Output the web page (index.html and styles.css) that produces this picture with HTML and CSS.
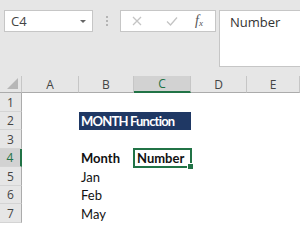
FILE: index.html
```html
<!DOCTYPE html>
<html>
<head>
<meta charset="utf-8">
<link rel="stylesheet" href="styles.css">
</head>
<body>
<div class="app">
  <div class="topbar">
    <div class="namebox">
      <span class="nb-text">C4</span>
      <span class="nb-arrow"></span>
    </div>
    <div class="sep"><i></i><i></i><i></i></div>
    <div class="fbtns">
      <svg class="fb-x" width="10" height="10" viewBox="0 0 10 10"><path d="M1 1L9 9M9 1L1 9" stroke="#c4c4c4" stroke-width="1.3" fill="none"/></svg>
      <svg class="fb-ok" width="12" height="10" viewBox="0 0 12 10"><path d="M1 5.5L4.5 9L11 1.5" stroke="#c4c4c4" stroke-width="1.3" fill="none"/></svg>
      <span class="fb-fx">f<sub>x</sub></span>
    </div>
    <div class="formula">Number</div>
  </div>
  <div class="sheet">
    <div class="corner"><span class="tri"></span></div>
    <div class="ch">A</div>
    <div class="ch">B</div>
    <div class="ch ch-sel">C</div>
    <div class="ch">D</div>
    <div class="ch">E</div>

    <div class="rh">1</div><div class="c"></div><div class="c"></div><div class="c"></div><div class="c"></div><div class="c"></div>
    <div class="rh">2</div><div class="c"></div><div class="c title">MONTH Function</div><div class="c"></div><div class="c"></div>
    <div class="rh">3</div><div class="c"></div><div class="c"></div><div class="c"></div><div class="c"></div><div class="c"></div>
    <div class="rh rh-sel">4</div><div class="c"></div><div class="c b">Month</div><div class="c b sel">Number</div><div class="c"></div><div class="c"></div>
    <div class="rh">5</div><div class="c"></div><div class="c">Jan</div><div class="c"></div><div class="c"></div><div class="c"></div>
    <div class="rh">6</div><div class="c"></div><div class="c">Feb</div><div class="c"></div><div class="c"></div><div class="c"></div>
    <div class="rh">7</div><div class="c"></div><div class="c">May</div><div class="c"></div><div class="c"></div><div class="c"></div>
  </div>
</div>
</body>
</html>
```
FILE: styles.css
```css
html, body {
  margin: 0;
  padding: 0;
  background: #ffffff;
  overflow: hidden;
}
.app {
  width: 300px;
  height: 225px;
  overflow: hidden;
  font-family: "Open Sans", "Noto Sans", sans-serif;
}
.topbar {
  height: 76px;
  box-sizing: border-box;
  background: #e6e6e6;
  display: flex;
  align-items: flex-start;
  padding: 10px 0 0 4px;
}
.namebox {
  width: 89px;
  height: 22px;
  box-sizing: border-box;
  background: #fff;
  border: 1px solid #c6c6c6;
  display: flex;
  align-items: center;
  justify-content: space-between;
  padding: 0 6px 0 6px;
}
.nb-text {
  font-size: 13px;
  color: #444;
}
.nb-arrow {
  width: 0;
  height: 0;
  border-left: 3px solid transparent;
  border-right: 3px solid transparent;
  border-top: 3px solid #666;
}
.sep {
  width: 27px;
  height: 22px;
  display: flex;
  flex-direction: column;
  align-items: center;
  justify-content: center;
  gap: 2px;
}
.sep i {
  display: block;
  width: 2px;
  height: 2px;
  background: #b4b4b4;
}
.fbtns {
  width: 96px;
  height: 22px;
  box-sizing: border-box;
  background: #fff;
  border: 1px solid #c6c6c6;
  display: flex;
  align-items: center;
  padding-left: 11px;
}
.fb-x { margin-right: 24px; }
.fb-ok { margin-right: 17px; }
.fb-fx {
  font-family: "Liberation Serif", serif;
  font-style: italic;
  font-size: 14px;
  color: #555;
  line-height: 1;
}
.fb-fx sub { font-size: 9px; vertical-align: -1px; }
.formula {
  margin-left: 3px;
  flex: 1;
  height: 57px;
  box-sizing: border-box;
  background: #fff;
  border: 1px solid #c6c6c6;
  border-right: none;
  padding: 2px 0 0 10px;
  font-size: 13px;
  color: #333;
}
.sheet {
  display: grid;
  grid-template-columns: 22px 57px 55px 57px 56px 1fr;
  grid-template-rows: 17px 19px 18px 19px 18px 19px 18px 19px;
  background: #fff;
}
.corner {
  background: #e6e6e6;
  border-right: 1px solid #c6c6c6;
  border-bottom: 1px solid #ababab;
  position: relative;
}
.tri {
  position: absolute;
  right: 3px;
  bottom: 3px;
  width: 0;
  height: 0;
  border-left: 11px solid transparent;
  border-bottom: 11px solid #b7b7b7;
}
.ch {
  background: #e6e6e6;
  border-right: 1px solid #c6c6c6;
  border-bottom: 1px solid #ababab;
  font-size: 12px;
  color: #444;
  display: flex;
  align-items: center;
  justify-content: center;
}
.ch-sel {
  background: #d2d2d2;
  color: #217346;
  border-bottom: 2px solid #217346;
}
.rh {
  background: #e6e6e6;
  border-right: 1px solid #ababab;
  border-bottom: 1px solid #d4d4d4;
  font-size: 12px;
  color: #444;
  display: flex;
  align-items: center;
  justify-content: center;
}
.rh-sel {
  background: #d2d2d2;
  color: #217346;
  border-right: 2px solid #217346;
}
.c {
  font-family: "Lato", "Carlito", sans-serif;
  font-size: 13px;
  color: #111;
  display: flex;
  align-items: center;
  padding-left: 2px;
  white-space: nowrap;
}
.b { font-weight: bold; }
.title {
  grid-column: span 2;
  background: #1f3864;
  color: #fff;
  font-weight: bold;
  letter-spacing: -0.8px;
}
.sel {
  position: relative;
  padding-left: 3px;
}
.sel::before {
  content: "";
  position: absolute;
  left: -1px;
  top: -1px;
  right: -1px;
  bottom: -1px;
  border: 2px solid #217346;
}
.sel::after {
  content: "";
  position: absolute;
  right: -3px;
  bottom: -3px;
  width: 5px;
  height: 5px;
  background: #217346;
  border: 1px solid #fff;
}
```
